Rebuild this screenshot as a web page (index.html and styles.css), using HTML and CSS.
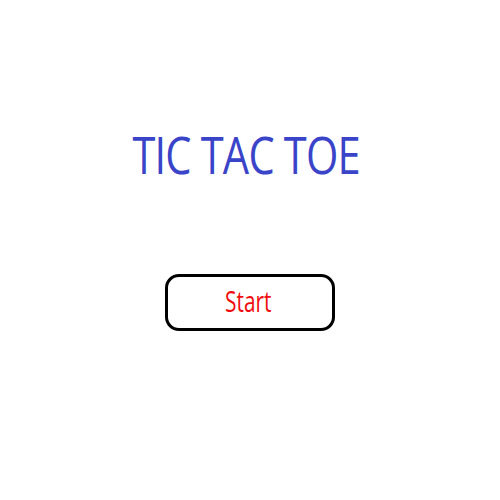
FILE: index.html
```html
<!DOCTYPE html>
<html>
<head>
<meta charset="utf-8">
<link rel="stylesheet" href="styles.css">
</head>
<body>
<main class="screen">
  <h1 class="title">TIC TAC TOE</h1>
  <button class="start"><span class="label">Start</span></button>
</main>
</body>
</html>
```
FILE: styles.css
```css
html, body {
  margin: 0;
  padding: 0;
  background: #ffffff;
}
.screen {
  width: 500px;
  height: 500px;
  display: flex;
  flex-direction: column;
  align-items: center;
  padding-top: 123px;
  box-sizing: border-box;
}
.title {
  margin: 0 8px 0 0;
  font-family: "Open Sans", sans-serif;
  font-weight: 400;
  font-size: 52px;
  line-height: 62px;
  color: #3a44c9;
  letter-spacing: -1px;
  transform: scaleX(0.8);
}
.start {
  margin-top: 89px;
  width: 170px;
  height: 57px;
  border: 3px solid #000;
  border-radius: 14px;
  background: #fff;
  padding: 0 4px 4px 0;
  box-sizing: border-box;
  display: flex;
  align-items: center;
  justify-content: center;
}
.label {
  display: inline-block;
  color: #f00c0c;
  font-family: "Open Sans", sans-serif;
  font-size: 29px;
  line-height: 34px;
  transform: scaleX(0.72);
}
```
